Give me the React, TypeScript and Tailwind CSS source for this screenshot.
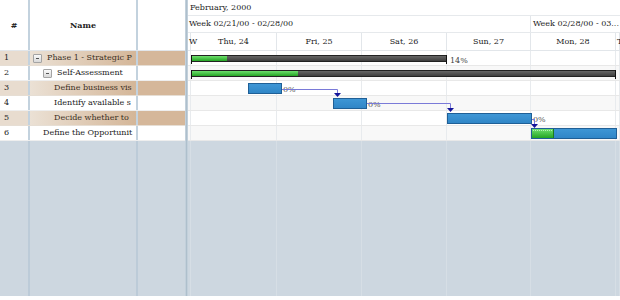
import React from "react";

const rows = [
  { n: 1, name: "Phase 1 - Strategic P", pad: "pl-[3px]", exp: true, tan: true },
  { n: 2, name: "Self-Assessment", pad: "pl-[13px]", exp: true, tan: false },
  { n: 3, name: "Define business vis", pad: "pl-[24px]", exp: false, tan: true },
  { n: 4, name: "Identify available s", pad: "pl-[24px]", exp: false, tan: false },
  { n: 5, name: "Decide whether to", pad: "pl-[24px]", exp: false, tan: true },
  { n: 6, name: "Define the Opportunit", pad: "pl-[13px]", exp: false, tan: false },
];

// day columns of the timeline (partial first and last)
const days = [
  { label: "W", w: "w-[3px]", left: true },
  { label: "Thu, 24", w: "w-[86px]" },
  { label: "Fri, 25", w: "w-[85px]" },
  { label: "Sat, 26", w: "w-[85px]" },
  { label: "Sun, 27", w: "w-[84px]" },
  { label: "Mon, 28", w: "w-[85px]" },
  { label: "T", w: "w-[4px]", left: true },
];

function Expander() {
  return (
    <span className="w-[9px] h-[9px] mr-[5px] shrink-0 border border-[#a4a4a4] rounded-[1px] bg-gradient-to-b from-[#fafafa] to-[#d8d8d8] flex items-center justify-center">
      <span className="w-[3px] h-px bg-[#555]" />
    </span>
  );
}

function Bars() {
  return (
    <svg className="absolute left-0 top-0" width="432" height="91" viewBox="0 0 432 91">
      <defs>
        <linearGradient id="dark" x1="0" y1="0" x2="0" y2="1">
          <stop offset="0" stopColor="#6a6a6a" />
          <stop offset="1" stopColor="#3a3a3a" />
        </linearGradient>
        <linearGradient id="green" x1="0" y1="0" x2="0" y2="1">
          <stop offset="0" stopColor="#6ee06e" />
          <stop offset="1" stopColor="#24a424" />
        </linearGradient>
        <linearGradient id="blue" x1="0" y1="0" x2="0" y2="1">
          <stop offset="0" stopColor="#3f97d6" />
          <stop offset="1" stopColor="#2f85c6" />
        </linearGradient>
      </defs>

      {/* summary 1 */}
      <rect x="3.5" y="4.5" width="255" height="6" fill="url(#dark)" stroke="#222" />
      <rect x="4" y="5" width="35" height="5" fill="url(#green)" />
      <path d="M3.5 4v9M258.5 4v9" stroke="#111" />
      <text x="262" y="12" fontSize="8" fill="#444" fontFamily="DejaVu Serif">14%</text>

      {/* summary 2 */}
      <rect x="3.5" y="19.5" width="424" height="6" fill="url(#dark)" stroke="#222" />
      <rect x="4" y="20" width="106" height="5" fill="url(#green)" />
      <path d="M3.5 19v9M427.5 19v9" stroke="#111" />

      {/* tasks */}
      <rect x="60.5" y="32.5" width="33" height="10" fill="url(#blue)" stroke="#1f5f96" />
      <text x="95" y="41" fontSize="8" fill="#555" fontFamily="DejaVu Serif">0%</text>
      <path d="M94 38.5H149.5V43" stroke="#7a7ad8" fill="none" />
      <polygon points="146,42 153,42 149.5,46" fill="#14149a" />

      <rect x="145.5" y="47.5" width="33" height="10" fill="url(#blue)" stroke="#1f5f96" />
      <text x="180" y="56" fontSize="8" fill="#555" fontFamily="DejaVu Serif">0%</text>
      <path d="M179 52.5H262.5V58" stroke="#7a7ad8" fill="none" />
      <polygon points="259,57 266,57 262.5,61" fill="#14149a" />

      <rect x="259.5" y="62.5" width="84" height="10" fill="url(#blue)" stroke="#1f5f96" />
      <text x="345" y="71" fontSize="8" fill="#555" fontFamily="DejaVu Serif">0%</text>
      <path d="M344 68.5H346.5V74" stroke="#7a7ad8" fill="none" />
      <polygon points="343,73 350,73 346.5,77" fill="#14149a" />

      <rect x="343.5" y="77.5" width="85" height="10" fill="url(#blue)" stroke="#1f5f96" />
      <rect x="344" y="78" width="21" height="9" fill="url(#green)" />
      <path d="M345 79.5H364" stroke="#b8f0b8" strokeDasharray="1 1" />
      <path d="M365.5 78v9" stroke="#1d7a1d" />
    </svg>
  );
}

export default function App() {
  return (
    <div className="w-[620px] h-[300px] bg-white overflow-hidden font-['DejaVu_Serif',serif] text-[8px] text-[#222]">
      <div className="h-[296px] flex bg-[#cdd7e0]">
        {/* LEFT GRID */}
        <div className="w-[185px] flex flex-col">
          <div className="h-[51px] flex bg-white border-b border-[#e2e6ea] font-bold">
            <div className="w-[30px] flex items-center justify-center border-r-2 border-[#c3d2de]">#</div>
            <div className="w-[108px] flex items-center justify-center border-r-2 border-[#c3d2de]">Name</div>
            <div className="flex-1" />
          </div>
          {rows.map((r) => (
            <div key={r.n} className={`h-[15px] flex border-b ${r.tan ? "border-[#e6ded4]" : "border-[#eeeeee]"}`}>
              <div className={`w-[30px] pl-[4px] flex items-center border-r-2 border-[#c3d2de] ${r.tan ? "bg-[#e8dccf]" : "bg-white"}`}>
                {r.n}
              </div>
              <div
                className={`w-[108px] flex items-center overflow-hidden whitespace-nowrap border-r-2 border-[#c3d2de] ${r.pad} ${
                  r.tan ? "bg-gradient-to-r from-[#ebe1d5] to-[#d4b698] text-[#3a2e22]" : "bg-white"
                }`}
              >
                {r.exp && <Expander />}
                <span>{r.name}</span>
              </div>
              <div className={`flex-1 ${r.tan ? "bg-[#d5b79a]" : "bg-white"}`} />
            </div>
          ))}
          <div className="flex-1 flex">
            <div className="w-[30px] border-r-2 border-[#bccbd8]" />
            <div className="w-[108px] border-r-2 border-[#bccbd8]" />
          </div>
        </div>

        {/* SPLITTER */}
        <div className="w-[3px] bg-[#aebfcc] border-x border-[#c2d0db]" />

        {/* GANTT */}
        <div className="flex-1 flex flex-col">
          <div className="bg-white">
            <div className="h-[16px] flex items-center pl-[2px] border-b border-[#e6e9ec]">February, 2000</div>
            <div className="h-[17px] flex border-b border-[#e6e9ec]">
              <div className="w-[343px] flex items-center pl-[1px] border-r border-[#e2e6ea]">Week 02/21/00 - 02/28/00</div>
              <div className="flex-1 flex items-center pl-[2px] whitespace-nowrap overflow-hidden">Week 02/28/00 - 03...</div>
            </div>
            <div className="h-[18px] flex border-b border-[#e2e6ea]">
              {days.map((d) => (
                <div
                  key={d.label}
                  className={`${d.w} shrink-0 flex items-center whitespace-nowrap border-r border-[#e2e6ea] ${
                    d.left ? "pl-[1px] overflow-visible" : "justify-center"
                  }`}
                >
                  {d.label}
                </div>
              ))}
            </div>
          </div>

          <div className="relative flex-1 flex flex-col">
            {rows.map((r) => (
              <div key={r.n} className={`h-[15px] flex border-b border-[#e8e8e8] ${r.n % 2 === 0 ? "bg-[#f8f8f8]" : "bg-white"}`}>
                {days.map((d) => (
                  <div key={d.label} className={`${d.w} shrink-0 border-r border-[#e8ebee]`} />
                ))}
              </div>
            ))}
            <div className="flex-1 flex">
              {days.map((d) => (
                <div key={d.label} className={`${d.w} shrink-0 border-r border-[#d6dee5]`} />
              ))}
            </div>
            <Bars />
          </div>
        </div>
      </div>
    </div>
  );
}
